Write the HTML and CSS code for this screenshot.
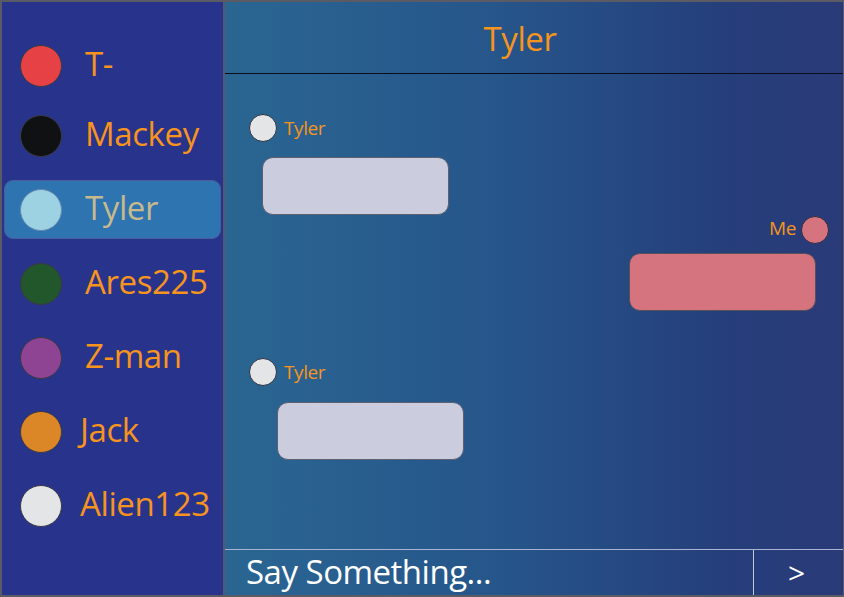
FILE: index.html
```html
<!DOCTYPE html>
<html>
<head>
<meta charset="utf-8">
<link rel="stylesheet" href="styles.css">
</head>
<body>
<div class="app">
  <aside class="sidebar">
    <div class="contact"><span class="dot red"></span><span class="name">T-</span></div>
    <div class="contact"><span class="dot black"></span><span class="name">Mackey</span></div>
    <div class="contact active"><span class="dot light"></span><span class="name">Tyler</span></div>
    <div class="contact"><span class="dot green"></span><span class="name">Ares225</span></div>
    <div class="contact"><span class="dot purple"></span><span class="name">Z-man</span></div>
    <div class="contact tight"><span class="dot orange"></span><span class="name">Jack</span></div>
    <div class="contact tight"><span class="dot white"></span><span class="name">Alien123</span></div>
  </aside>
  <main class="chat">
    <header class="chat-header">Tyler</header>
    <section class="messages">
      <div class="msg them">
        <div class="who"><span class="avatar white"></span><span class="label">Tyler</span></div>
        <div class="bubble"></div>
      </div>
      <div class="msg me">
        <div class="who"><span class="label">Me</span><span class="avatar pink"></span></div>
        <div class="bubble"></div>
      </div>
      <div class="msg them indent">
        <div class="who"><span class="avatar white"></span><span class="label">Tyler</span></div>
        <div class="bubble"></div>
      </div>
    </section>
    <footer class="composer">
      <div class="input">Say Something...</div>
      <div class="send">&gt;</div>
    </footer>
  </main>
</div>
</body>
</html>
```
FILE: styles.css
```css
* { box-sizing: border-box; }
html, body { margin: 0; padding: 0; }
body {
  width: 844px;
  height: 597px;
  overflow: hidden;
  font-family: "Open Sans", "Liberation Sans", sans-serif;
}
.app {
  display: flex;
  width: 844px;
  height: 597px;
  border: 2px solid #5b5b66;
  border-right-width: 1px;
  background: #28338c;
}
.sidebar {
  width: 223px;
  flex: none;
  background: #28338c;
  border-right: 2px solid #55586e;
  display: flex;
  flex-direction: column;
  gap: 15px;
  padding: 34px 2px 0 2px;
}
.contact {
  height: 59px;
  display: flex;
  align-items: center;
  padding-left: 15px;
  border: 1px solid transparent;
  border-radius: 9px;
}
.contact:first-child { margin-bottom: -4px; }
.contact.active {
  background: #2e74b0;
  border-color: #4b5c9c;
}
.dot {
  width: 42px;
  height: 42px;
  border-radius: 50%;
  border: 1px solid #3a3a44;
  flex: none;
}
.name {
  margin-left: 23px;
  color: #f7941d;
  font-size: 33px;
  letter-spacing: -0.4px;
  line-height: 1;
  padding-bottom: 4px;
}
.contact.tight .name { margin-left: 18px; }
.contact.active .name { color: #c6b98e; }
.red { background: #e64246; }
.black { background: #0f1112; }
.light { background: #9dd2e2; border-color: #6a8ab0; }
.green { background: #22572c; }
.purple { background: #8e4393; }
.orange { background: #dc8727; }
.white { background: #e4e5e7; }
.pink { background: #d5737e; }

.chat {
  flex: 1;
  display: flex;
  flex-direction: column;
  background: linear-gradient(to right, #2a6692 0%, #26558a 45%, #253f7b 80%, #2a3a78 100%);
}
.chat-header {
  height: 72px;
  border-bottom: 1px solid #0b0d1a;
  display: flex;
  align-items: center;
  justify-content: center;
  color: #f7941d;
  font-size: 33px;
  letter-spacing: -0.4px;
  padding-right: 28px;
  padding-top: 2px;
}
.messages {
  flex: 1;
  display: flex;
  flex-direction: column;
  padding: 40px 14px 0 24px;
}
.msg { display: flex; flex-direction: column; }
.msg.them { align-items: flex-start; }
.msg.me { align-items: flex-end; margin-top: 1px; }
.msg.indent { margin-top: 47px; }
.who {
  display: flex;
  align-items: center;
  gap: 7px;
  height: 28px;
}
.msg.me .who { gap: 5px; }
.avatar {
  width: 28px;
  height: 28px;
  border-radius: 50%;
  border: 1px solid #2e3040;
  flex: none;
}
.label {
  color: #f7941d;
  font-size: 19px;
  letter-spacing: -0.4px;
  line-height: 1;
}
.msg.me .label { padding-bottom: 3px; }
.bubble {
  width: 187px;
  height: 58px;
  border-radius: 11px;
  border: 1px solid #5d6070;
  background: #cbcddf;
  margin-top: 15px;
  margin-left: 13px;
}
.msg.indent .bubble { margin-left: 28px; margin-top: 16px; }
.msg.me .bubble {
  background: #d5747f;
  border-color: #55505a;
  margin-left: 0;
  margin-right: 13px;
  margin-top: 9px;
}
.composer {
  height: 46px;
  border-top: 1px solid #aab3d2;
  display: flex;
  color: #ffffff;
}
.input {
  flex: 1;
  font-size: 33px;
  letter-spacing: -0.5px;
  padding-left: 21px;
  padding-bottom: 2px;
  display: flex;
  align-items: center;
  border-right: 1px solid #c0c6dc;
  line-height: 1;
}
.send {
  width: 89px;
  font-size: 30px;
  display: flex;
  align-items: center;
  justify-content: center;
  padding-right: 4px;
  line-height: 1;
}
```
